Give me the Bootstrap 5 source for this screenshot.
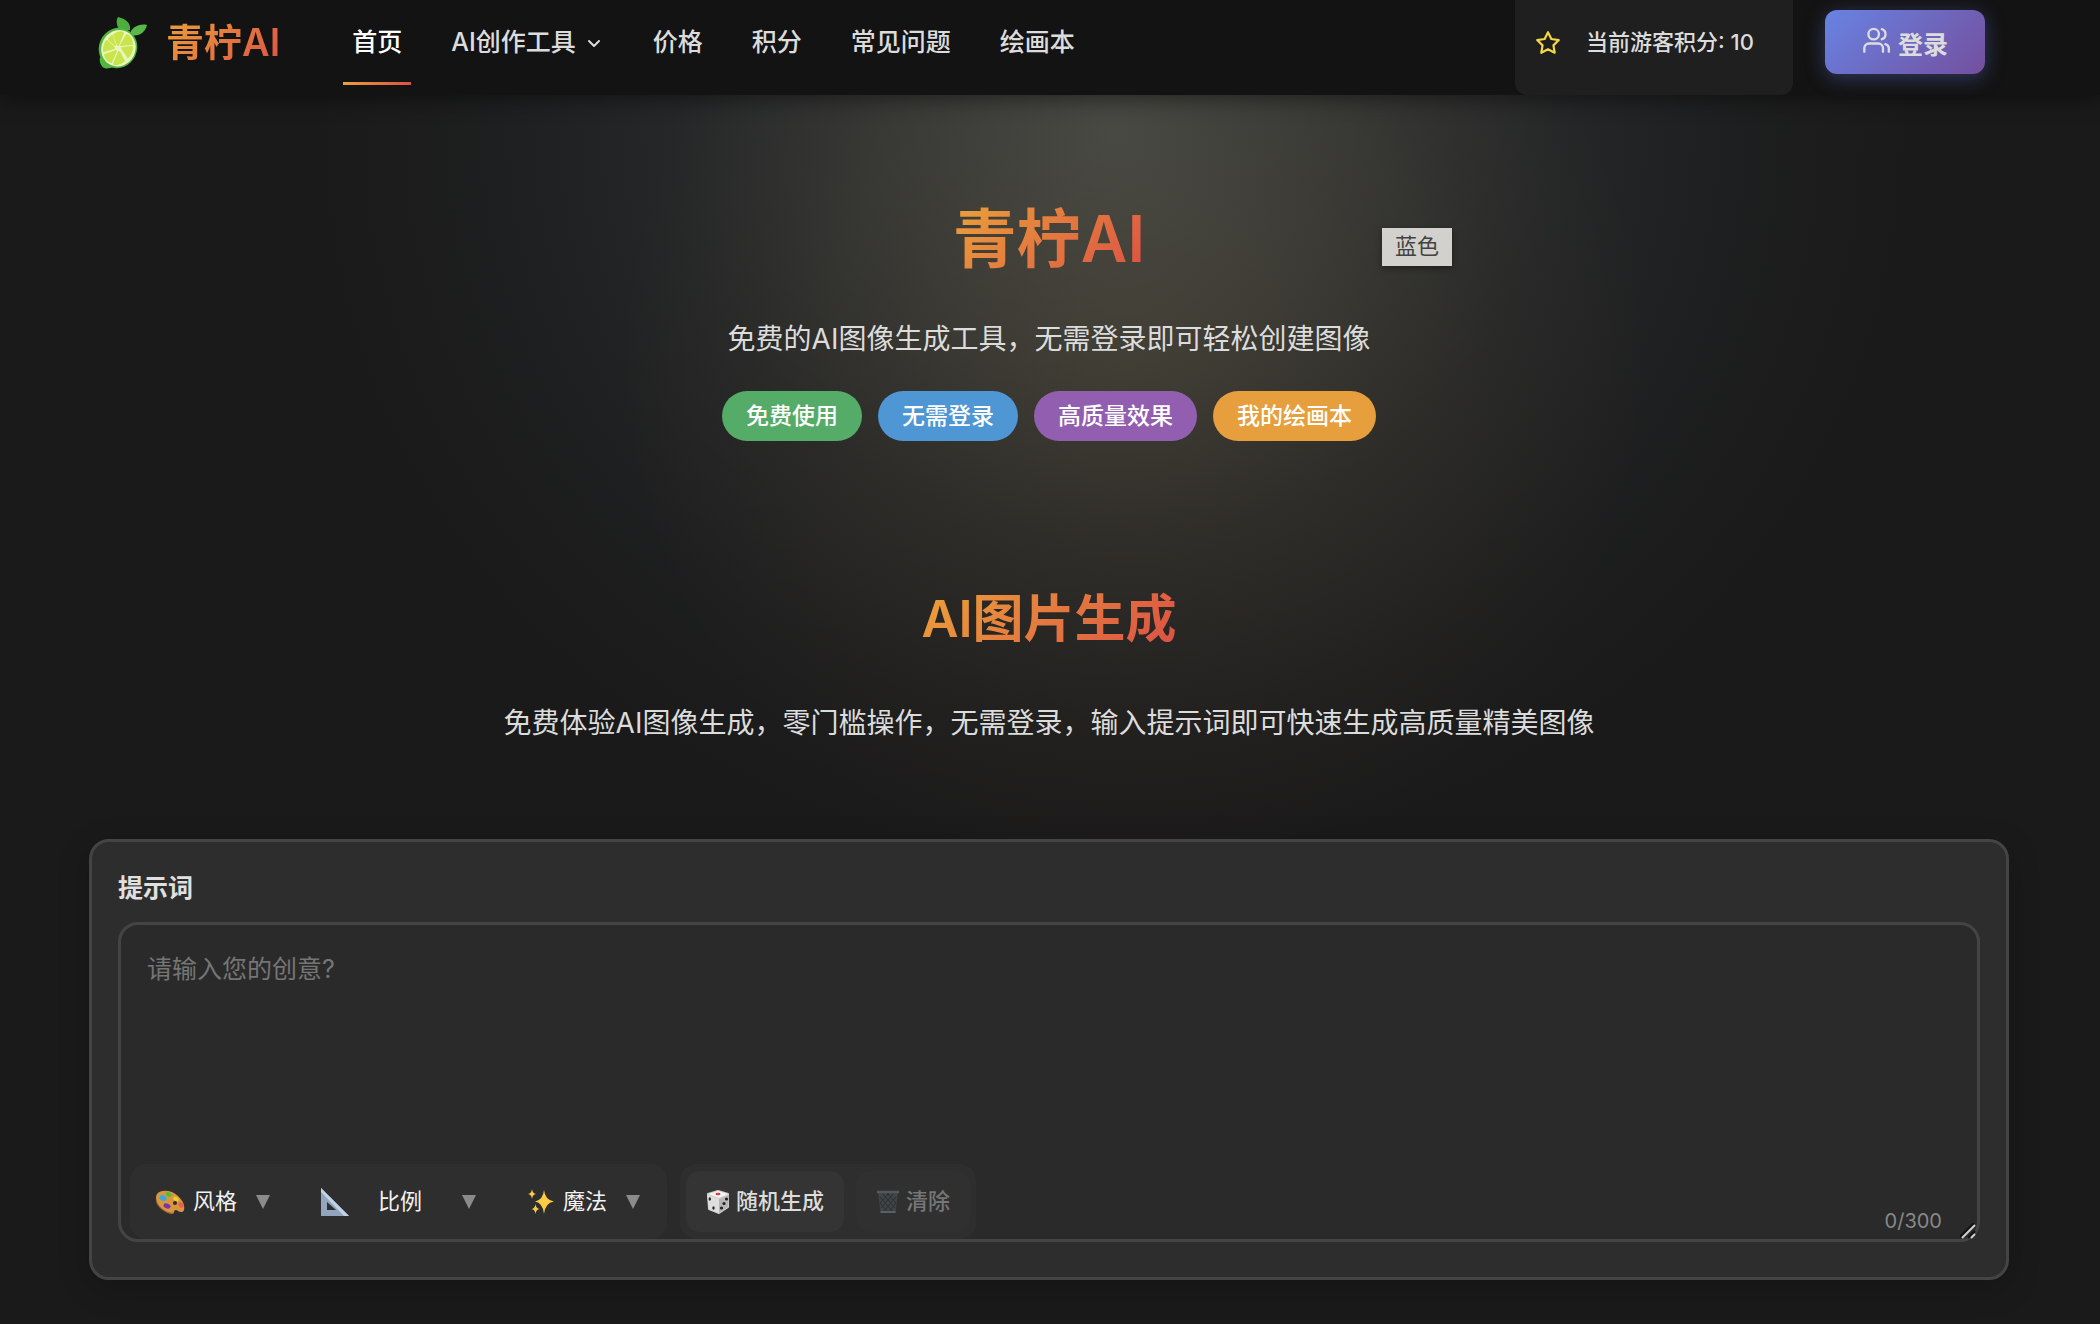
<!DOCTYPE html>
<html lang="zh-CN">
<head>
<meta charset="utf-8">
<meta name="viewport" content="width=device-width, initial-scale=1">
<title>青柠AI</title>
<link href="https://cdn.jsdelivr.net/npm/bootstrap@5.3.0/dist/css/bootstrap.min.css" rel="stylesheet">
<style>
  body {
    min-height: 100vh;
    color: #dcdcdc;
    font-family: Inter, "Noto Sans CJK SC", sans-serif;
    background-color: #1a1a1a;
    background-image:
      radial-gradient(circle 520px at 54% 360px, rgba(225, 160, 60, .09), rgba(230, 150, 60, .045) 50%, transparent),
      radial-gradient(ellipse 800px 740px at 53% 130px, rgba(145, 160, 155, .32), rgba(140, 155, 150, .21) 30%, rgba(130, 155, 160, .1) 55%, rgba(120, 150, 160, .03) 80%, transparent);
    background-repeat: no-repeat;
  }
  .warm-text {
    background: linear-gradient(135deg, #eba23a, #dc5044);
    -webkit-background-clip: text;
    background-clip: text;
    color: transparent;
  }
  .site-bar {
    height: 95px;
    padding: 0 115px 0 96px;
    background: #131313;
    box-shadow: 0 4px 20px rgba(0, 0, 0, .45);
    align-items: stretch;
  }
  .bar-part { padding-bottom: 10px; }
  .brand-name { font-size: 38px; font-weight: 600; margin-left: 18px; }
  .site-links { gap: 31px; margin-left: 63px; }
  .site-links a {
    padding: 0 9px;
    font-size: 25px;
    font-weight: 500;
    color: #dcdcdc;
    text-decoration: none;
    border-bottom: 3px solid transparent;
    border-top: 3px solid transparent;
  }
  .site-links a.active {
    color: #fff;
    border-bottom-color: #eba23a;
    border-image: linear-gradient(90deg, #eba23a, #dc5044) 1;
    border-top-width: 0;
    padding-top: 3px;
  }
  .score-box {
    width: 278px;
    padding-left: 20px;
    background: #1f1f1f;
    border-radius: 0 0 12px 12px;
    font-size: 22px;
    font-weight: 500;
    gap: 25px;
  }
  .login-btn {
    width: 160px;
    height: 64px;
    margin: 10px 0 0 32px;
    border: 0;
    border-radius: 12px;
    color: #dcdcdc;
    font-size: 25px;
    font-weight: 600;
    background: linear-gradient(135deg, #6883e3, #744f9e);
    box-shadow: 0 4px 20px rgba(102, 126, 234, .35);
  }
  .page-body { padding: 104px 91px 0 89px; }
  .hero-title { font-size: 64px; font-weight: 600; line-height: 80px; }
  .section-title { font-size: 51px; font-weight: 600; line-height: 60px; }
  .sub-line { font-size: 28px; line-height: 40px; }
  .pill {
    height: 50px;
    line-height: 50px;
    padding: 0 24px;
    border-radius: 25px;
    color: #fff;
    font-size: 23px;
    font-weight: 500;
    text-decoration: none;
  }
  .pill-green { background: #55ab68; }
  .pill-blue { background: #4f96d5; }
  .pill-purple { background: #925fb0; }
  .pill-orange { background: #e79e3c; }
  .color-tip {
    position: absolute;
    left: calc(50% + 333px);
    top: 29px;
    width: 70px;
    height: 38px;
    line-height: 36px;
    text-align: center;
    font-size: 22px;
    color: #434340;
    background: #d2d1cd;
    box-shadow: 0 2px 6px rgba(0, 0, 0, .4);
  }
  .prompt-card {
    padding: 26px 26px 35px;
    border: 3px solid #444;
    border-radius: 20px;
    background: #2d2d2d;
    box-shadow: 0 8px 32px rgba(0, 0, 0, .2);
  }
  .prompt-label { font-size: 25px; font-weight: 600; line-height: 40px; margin-bottom: 14px; color: #e0e0e0; }
  .prompt-input, .prompt-input:focus {
    height: 320px;
    padding: 24px 26px;
    border: 3px solid #444;
    border-radius: 20px;
    color: #e0e0e0;
    background: #2a2a2a;
    font-size: 25px;
    line-height: 40px;
    resize: none;
    box-shadow: none;
  }
  .prompt-input::placeholder { color: #757575; }
  .tool-row { position: absolute; left: 12px; bottom: 3px; gap: 13px; }
  .tool-group { height: 75px; border-radius: 16px; background: #2e2e2e; }
  .tool-picks { padding: 0 27px 0 25px; gap: 51px; }
  .tool-picks select {
    appearance: none;
    border: 0;
    padding: 0;
    color: #f2f2f2;
    background: transparent;
    font-size: 22px;
  }
  .pick { gap: 8px; }
  .pick-wide { gap: 29px; }
  .pick-caret { margin-left: 10px; }
  .tool-acts { padding: 0 6px; gap: 12px; }
  .tool-acts button {
    height: 61px;
    border: 0;
    border-radius: 14px;
    padding: 0 20px;
    gap: 6px;
    color: #dcdcdc;
    background: #343434;
    font-size: 22px;
    font-weight: 500;
  }
  .tool-acts button:disabled { background: #303030; color: #767676; }
  .char-count { position: absolute; right: 38px; bottom: 6px; font-size: 20px; line-height: 30px; color: #888; }
  .grip { position: absolute; right: 4px; bottom: 3px; }
</style>
</head>
<body>
<svg width="0" height="0" class="position-absolute" aria-hidden="true">
  <symbol id="caret" viewBox="0 0 14 14"><path d="M0 0h14L7 14z" fill="#8b8b8b"/></symbol>
</svg>

<nav class="site-bar d-flex position-relative">
  <a href="#" class="bar-part d-flex align-items-center text-decoration-none">
    <svg width="52" height="52" viewBox="0 0 52 52" aria-hidden="true">
      <path d="M24 14C20 8 20 3 22 0c9 2 13 7 12 13z" fill="#4cae3c"/>
      <path d="M34 17c1-6 9-11 17-9-2 8-9 12-16 10z" fill="#57b947"/>
      <path d="M4 40c-1 5 1 9 4 11 3 1 6 0 10-1z" fill="#52b53f"/>
      <ellipse cx="22" cy="31" rx="19" ry="20.500" transform="rotate(25 22 31)" fill="#52b53f"/>
      <ellipse cx="22.500" cy="31" rx="17" ry="18.500" transform="rotate(25 22 31)" fill="#eaf5bd"/>
      <g fill="#c9e54d" stroke="#c9e54d" stroke-width="2" stroke-linejoin="round">
        <path d="M22 28l-4-10q5-4 9-2z"/>
        <path d="M25 28l6-10q5 3 5 9z"/>
        <path d="M26 31l10-1q0 6-4 10z"/>
        <path d="M23 35l5 9q-5 4-10 3z"/>
        <path d="M20 34l-5 11q-5-2-6-7z"/>
        <path d="M18 31l-10 3q0-7 3-10z"/>
        <path d="M19 28l-6-6 3-3z"/>
      </g>
    </svg>
    <span class="brand-name warm-text">青柠AI</span>
  </a>
  <div class="bar-part site-links d-flex">
    <a href="#" class="active d-flex align-items-center">首页</a>
    <a href="#" class="d-flex align-items-center">AI创作工具
      <svg class="ms-2" width="20" height="20" viewBox="0 0 20 20" fill="none" stroke="#dcdcdc" stroke-width="2" stroke-linecap="round" stroke-linejoin="round" aria-hidden="true"><path d="M5 8l5 5 5-5"/></svg>
    </a>
    <a href="#" class="d-flex align-items-center">价格</a>
    <a href="#" class="d-flex align-items-center">积分</a>
    <a href="#" class="d-flex align-items-center">常见问题</a>
    <a href="#" class="d-flex align-items-center">绘画本</a>
  </div>
  <div class="bar-part score-box d-flex align-items-center ms-auto">
    <svg width="26" height="26" viewBox="0 0 24 24" fill="none" stroke="#f6d743" stroke-width="2" stroke-linejoin="round" aria-hidden="true"><path d="M12 2l3.1 6.3 6.9 1-5 4.9 1.2 6.8-6.2-3.2L5.800 21 7 14.200l-5-4.900 6.900-1z"/></svg>
    <span>当前游客积分: 10</span>
  </div>
  <button type="button" class="login-btn d-flex align-items-center justify-content-center">
    <svg class="mb-1 me-2" width="28" height="28" viewBox="0 0 24 24" fill="none" stroke="#dcdcdc" stroke-width="2" stroke-linecap="round" stroke-linejoin="round" aria-hidden="true"><circle cx="10" cy="7" r="4.500"/><path d="M2 22v-3a4 4 0 0 1 4-4h8a4 4 0 0 1 4 4v3"/><path d="M17 2.700a4.500 4.500 0 0 1 0 8.600"/><path d="M20 15.500a4 4 0 0 1 3 3.500v3"/></svg>
    <span class="pt-2">登录</span>
  </button>
</nav>

<main class="page-body">
  <section class="text-center position-relative">
    <h1 class="hero-title mb-0"><span class="warm-text">青柠AI</span></h1>
    <span class="color-tip" role="tooltip">蓝色</span>
    <p class="sub-line mb-0" style="margin-top:40px">免费的AI图像生成工具，无需登录即可轻松创建图像</p>
    <div class="d-flex flex-wrap justify-content-center gap-3" style="margin-top:32px">
      <a href="#" class="pill pill-green">免费使用</a>
      <a href="#" class="pill pill-blue">无需登录</a>
      <a href="#" class="pill pill-purple">高质量效果</a>
      <a href="#" class="pill pill-orange">我的绘画本</a>
    </div>
  </section>

  <section class="text-center" style="margin-top:148px">
    <h2 class="section-title mb-0"><span class="warm-text">AI图片生成</span></h2>
    <p class="sub-line mb-0" style="margin-top:54px">免费体验AI图像生成，零门槛操作，无需登录，输入提示词即可快速生成高质量精美图像</p>
  </section>

  <form class="prompt-card" style="margin-top:96px">
    <label for="prompt" class="prompt-label d-block">提示词</label>
    <div class="position-relative">
      <textarea id="prompt" class="prompt-input form-control" maxlength="300" placeholder="请输入您的创意?"></textarea>
      <div class="tool-row d-flex">
        <div class="tool-group tool-picks d-flex align-items-center">
          <div class="pick d-flex align-items-center">
            <label for="style" class="d-flex">
              <svg width="30" height="24" viewBox="0 0 30 24" role="img" aria-label="风格"><path d="M2 4C6-1 17 0 23 6c5 5 7 9 6 14-1 3-4 2-6 1-2-2-4-1-4 1 0 3-5 2-9-1C3 17-1 9 2 4z" fill="#d8963f"/><path d="M1 9c1 7 8 12 13 13 3 1 5 1 5-1v2c-2 2-7 0-10-2C4 18 0 13 1 9z" fill="#a8692a"/><ellipse cx="8" cy="8" rx="3.600" ry="2.800" fill="#3ba9dc" transform="rotate(25 8 8)"/><ellipse cx="14" cy="4.500" rx="3" ry="2" fill="#46c234" transform="rotate(25 14 4)"/><ellipse cx="21" cy="9" rx="3" ry="2" fill="#f3c932" transform="rotate(30 21 9)"/><ellipse cx="26" cy="15" rx="3" ry="2.200" fill="#ef5b52" transform="rotate(50 26 15)"/><ellipse cx="12" cy="16" rx="3.600" ry="2.400" fill="#7b34ae" transform="rotate(20 12 16)"/><circle cx="20" cy="13" r="2" fill="#2d2d2d"/></svg>
            </label>
            <select id="style"><option>风格</option></select>
            <svg class="pick-caret" width="14" height="14" aria-hidden="true"><use href="#caret"/></svg>
          </div>
          <div class="pick pick-wide d-flex align-items-center">
            <label for="ratio" class="d-flex">
              <svg width="28" height="28" viewBox="0 0 28 28" role="img" aria-label="比例"><path fill-rule="evenodd" d="M0 0l28 28H0zM6 14v8h9z" fill="#91a5bd"/><path d="M0 0l28 28h-5L0 4z" fill="#c3d3e5"/></svg>
            </label>
            <select id="ratio"><option>比例</option></select>
            <svg class="pick-caret" width="14" height="14" aria-hidden="true"><use href="#caret"/></svg>
          </div>
          <div class="pick d-flex align-items-center">
            <label for="magic" class="d-flex">
              <svg width="28" height="26" viewBox="0 0 28 26" role="img" aria-label="魔法"><g fill="#fccb45"><path d="M17 1q1 10 10 11.500Q18 14 17 25q-1-11-9-12.500Q16 11 17 1z"/><path d="M5 0q.500 4.500 4 5-3.500.500-4 5-.500-4.500-4-5 3.500-.500 4-5zM8.500 15q.500 4.500 4 5-3.500.500-4 5-.500-4.500-4-5 3.500-.500 4-5z"/></g></svg>
            </label>
            <select id="magic"><option>魔法</option></select>
            <svg class="pick-caret" width="14" height="14" aria-hidden="true"><use href="#caret"/></svg>
          </div>
        </div>
        <div class="tool-group tool-acts d-flex align-items-center">
          <button type="button" class="d-flex align-items-center">
            <svg width="24" height="24" viewBox="0 0 24 24" aria-hidden="true"><path d="M2 4l10-3 10 3v13l-9 6-10-4z" fill="#cfcfcf" stroke="#cfcfcf" stroke-width="2" stroke-linejoin="round"/><path d="M1 5l12 4v14L3 19z" fill="#dedede"/><path d="M13 9l10-4-1 12-9 6z" fill="#b5b5b5"/><path d="M2 4l10-3 10 3-9 4z" fill="#f2f2f2"/><ellipse cx="12" cy="4" rx="2.500" ry="1.200" fill="#e0393e"/><g fill="#222"><ellipse cx="3.800" cy="9" rx="1.200" ry="1.800"/><ellipse cx="7.500" cy="18" rx="1.200" ry="1.800"/><circle cx="20.500" cy="9" r="1.600"/><circle cx="18" cy="13.500" r="1.600"/><circle cx="15.500" cy="18" r="1.600"/></g></svg>
            <span>随机生成</span>
          </button>
          <button type="button" class="d-flex align-items-center" disabled>
            <svg width="24" height="24" viewBox="0 0 24 24" fill="none" aria-hidden="true"><path d="M2 2h20l-2.500 20q-7.500 2-15 0z" fill="#3f4447"/><path d="M4 7l13 15M7 4l12 14M11 3l9 10M4 13l9 10M20 7L7 22M17 4L5 18M13 3L4 13M20 13l-8 10" stroke="#2b2f32"/><path d="M1 2h22" stroke="#52585c" stroke-width="2.500"/><path d="M4.500 22h15" stroke="#566068" stroke-width="2"/></svg>
            <span>清除</span>
          </button>
        </div>
      </div>
      <span class="char-count">0/300</span>
      <svg class="grip" width="16" height="16" viewBox="0 0 16 16" stroke-width="2" aria-hidden="true"><path d="M0 14L14 0M8 15l7-7" stroke="#111"/><path d="M2 15L15 2M11 15l4-4" stroke="#d0d0d0"/></svg>
    </div>
  </form>
</main>
<script src="https://cdn.jsdelivr.net/npm/bootstrap@5.3.0/dist/js/bootstrap.bundle.min.js"></script>
</body>
</html>
